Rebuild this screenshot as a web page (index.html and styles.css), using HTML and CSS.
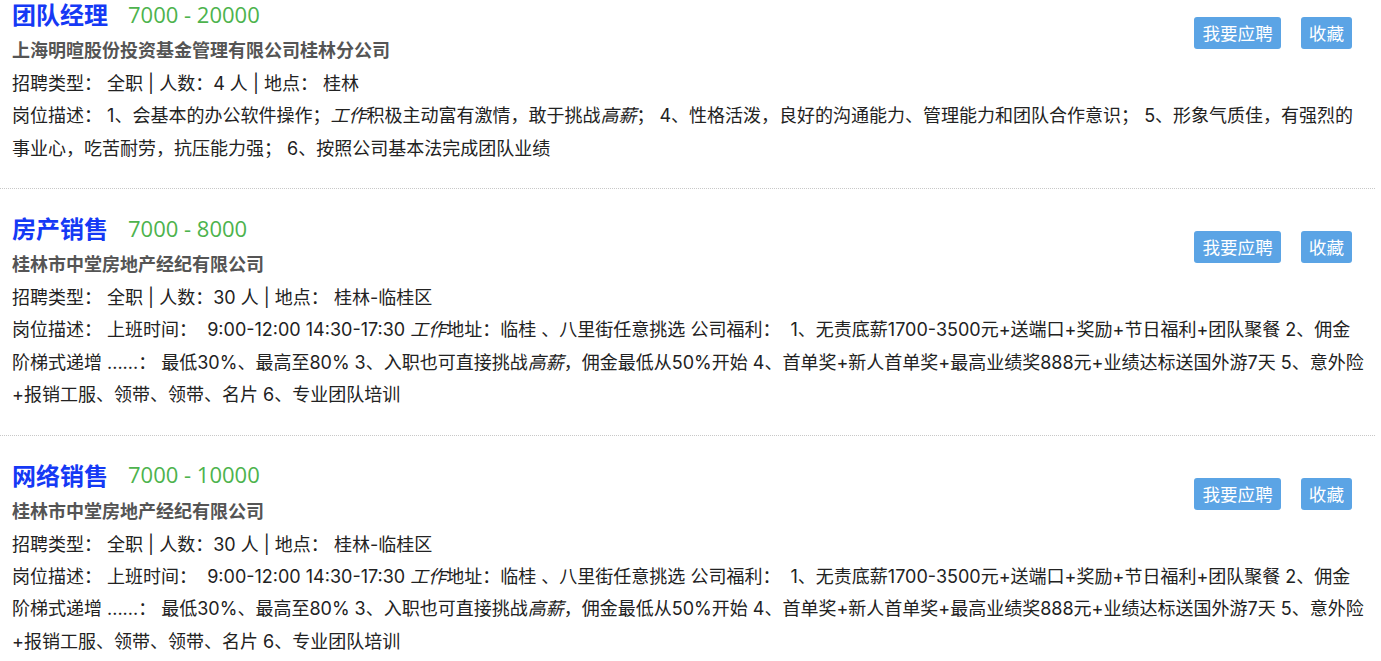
FILE: index.html
```html
<!DOCTYPE html>
<html lang="zh-CN">
<head>
    <meta charset="UTF-8">
    <meta name="viewport" content="width=device-width, initial-scale=1.0">
    <title>招聘信息</title>
    <link rel="stylesheet" href="styles.css">
</head>
<body>
    <div class="job-list">
        <div class="job-item">
            <div class="job-actions">
                <a class="btn" href="#">我要应聘</a>
                <a class="btn" href="#">收藏</a>
            </div>
            <div class="job-head">
                <a class="job-title" href="#">团队经理</a>
                <span class="job-salary">7000 - 20000</span>
            </div>
            <div class="job-company">上海明暄股份投资基金管理有限公司桂林分公司</div>
            <div class="job-meta">招聘类型：&nbsp;全职 | 人数：4 人 | 地点：&nbsp;桂林</div>
            <div class="job-desc">岗位描述： 1、会基本的办公软件操作；<em>工作</em>积极主动富有激情，敢于挑战<em>高薪</em>； 4、性格活泼，良好的沟通能力、管理能力和团队合作意识； 5、形象气质佳，有强烈的事业心，吃苦耐劳，抗压能力强； 6、按照公司基本法完成团队业绩</div>
        </div>

        <div class="job-item">
            <div class="job-actions">
                <a class="btn" href="#">我要应聘</a>
                <a class="btn" href="#">收藏</a>
            </div>
            <div class="job-head">
                <a class="job-title" href="#">房产销售</a>
                <span class="job-salary">7000 - 8000</span>
            </div>
            <div class="job-company">桂林市中堂房地产经纪有限公司</div>
            <div class="job-meta">招聘类型：&nbsp;全职 | 人数：30 人 | 地点：&nbsp;桂林-临桂区</div>
            <div class="job-desc">岗位描述：&nbsp;上班时间：&nbsp; 9:00-12:00 14:30-17:30 <em>工作</em>地址：临桂 、八里街任意挑选 公司福利：&nbsp; 1、无责底薪1700-3500元+送端口+奖励+节日福利+团队聚餐 2、佣金阶梯式递增 ......： 最低30%、最高至80% 3、入职也可直接挑战<em>高薪</em>，佣金最低从50%开始 4、首单奖+新人首单奖+最高业绩奖888元+业绩达标送国外游7天 5、意外险+报销工服、领带、领带、名片 6、专业团队培训</div>
        </div>

        <div class="job-item">
            <div class="job-actions">
                <a class="btn" href="#">我要应聘</a>
                <a class="btn" href="#">收藏</a>
            </div>
            <div class="job-head">
                <a class="job-title" href="#">网络销售</a>
                <span class="job-salary">7000 - 10000</span>
            </div>
            <div class="job-company">桂林市中堂房地产经纪有限公司</div>
            <div class="job-meta">招聘类型：&nbsp;全职 | 人数：30 人 | 地点：&nbsp;桂林-临桂区</div>
            <div class="job-desc">岗位描述：&nbsp;上班时间：&nbsp; 9:00-12:00 14:30-17:30 <em>工作</em>地址：临桂 、八里街任意挑选 公司福利：&nbsp; 1、无责底薪1700-3500元+送端口+奖励+节日福利+团队聚餐 2、佣金阶梯式递增 ......： 最低30%、最高至80% 3、入职也可直接挑战<em>高薪</em>，佣金最低从50%开始 4、首单奖+新人首单奖+最高业绩奖888元+业绩达标送国外游7天 5、意外险+报销工服、领带、领带、名片 6、专业团队培训</div>
        </div>
    </div>
</body>
</html>
```

FILE: styles.css
```css
body {
    font-family: 'Open Sans', 'Noto Sans CJK SC', sans-serif;
    margin: 0;
    padding: 0;
    background: #fff;
    color: #222;
}
.job-list {
    margin-top: -25px;
    margin-right: 6px;
}
.job-item {
    padding: 23px 10px 23px 12px;
    border-bottom: 1px dotted #c8c8c8;
}
.job-head {
    display: flex;
    align-items: center;
    height: 31px;
}
.job-title {
    font-size: 24px;
    font-weight: bold;
    color: #1539f5;
    text-decoration: none;
}
.job-salary {
    font-size: 22px;
    color: #4db34d;
    margin-left: 20px;
}
.job-company {
    font-size: 18px;
    font-weight: bold;
    color: #555;
    line-height: 33px;
    margin-top: 5px;
}
.job-meta {
    font-family: Inter, 'Noto Sans CJK SC', sans-serif;
    font-size: 18px;
    line-height: 33px;
}
.job-desc {
    font-family: Inter, 'Noto Sans CJK SC', sans-serif;
    font-size: 18px;
    line-height: 32.5px;
}
.job-desc em {
    font-style: italic;
}
.job-actions {
    float: right;
    display: flex;
    gap: 20px;
    padding-top: 19px;
    margin-right: 13px;
}
.btn {
    display: block;
    height: 32px;
    line-height: 32px;
    padding: 0 8px;
    font-size: 17.6px;
    color: #fff;
    background: #5ba4e5;
    border-radius: 3px;
    text-decoration: none;
}
```
